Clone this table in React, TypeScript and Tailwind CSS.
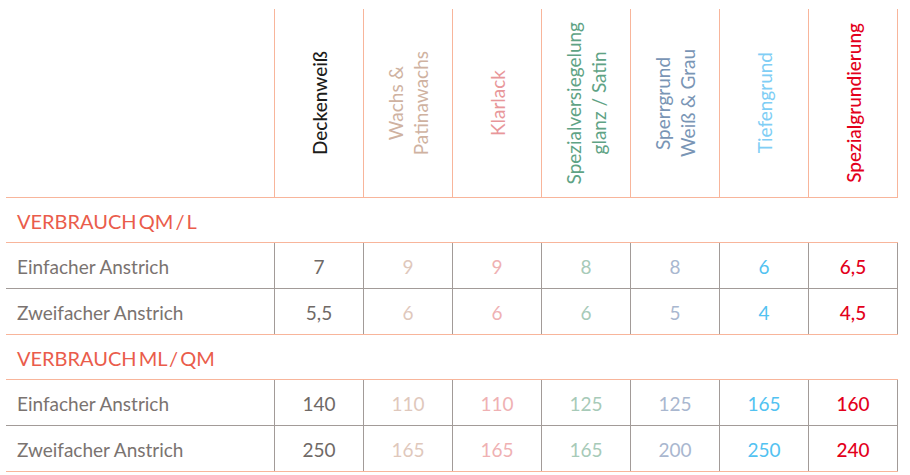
import React from "react";

type Col = {
  name: string[];
  head: string;
  num: string;
  strongHead?: boolean;
  strongNum?: boolean;
};

const COLS: Col[] = [
  { name: ["Deckenweiß"], head: "text-[#1d1d1b]", num: "text-[#6f6966]", strongHead: true },
  { name: ["Wachs &", "Patinawachs"], head: "text-[#cfb2a1]", num: "text-[#dfc8bc]" },
  { name: ["Klarlack"], head: "text-[#e8979a]", num: "text-[#efb1b3]" },
  { name: ["Spezialversiegelung", "glanz / Satin"], head: "text-[#5fa385]", num: "text-[#a7cab8]" },
  { name: ["Sperrgrund", "Weiß & Grau"], head: "text-[#7995b5]", num: "text-[#a9b7cf]" },
  { name: ["Tiefengrund"], head: "text-[#80cef5]", num: "text-[#52c2f1]" },
  {
    name: ["Spezialgrundierung"],
    head: "text-[#e3001b]",
    num: "text-[#e3001b]",
    strongHead: true,
    strongNum: true,
  },
];

const SECTIONS = [
  {
    title: "VERBRAUCH QM / L",
    rows: [
      { label: "Einfacher Anstrich", values: ["7", "9", "9", "8", "8", "6", "6,5"] },
      { label: "Zweifacher Anstrich", values: ["5,5", "6", "6", "6", "5", "4", "4,5"] },
    ],
  },
  {
    title: "VERBRAUCH ML / QM",
    rows: [
      { label: "Einfacher Anstrich", values: ["140", "110", "110", "125", "125", "165", "160"] },
      { label: "Zweifacher Anstrich", values: ["250", "165", "165", "165", "200", "250", "240"] },
    ],
  },
];

function HeaderRow() {
  return (
    <div className="flex h-[189px] border-b border-[#f8b59b]">
      <div className="w-[268px] shrink-0" />
      {COLS.map((c, i) => (
        <div
          key={c.name[0]}
          className={`w-[89px] shrink-0 border-l border-[#f8b59b] flex items-center justify-center ${
            i === COLS.length - 1 ? "w-[90px] border-r" : ""
          }`}
        >
          <div
            className={`[writing-mode:vertical-rl] rotate-180 text-center text-[19px] leading-[25px] ${c.head} ${
              c.strongHead ? "font-medium" : "font-normal"
            }`}
          >
            {c.name.map((line) => (
              <div key={line}>{line}</div>
            ))}
          </div>
        </div>
      ))}
    </div>
  );
}

function DataRow({ label, values, last }: { label: string; values: string[]; last: boolean }) {
  return (
    <div className={`flex h-[46px] border-b ${last ? "border-[#f8b59b]" : "border-[#a29b98]"}`}>
      <div className="w-[268px] shrink-0 flex items-center pl-[11px] pt-[3px] text-[19px] text-[#7a7370]">
        {label}
      </div>
      {values.map((v, i) => (
        <div
          key={i}
          className={`w-[89px] shrink-0 border-l border-[#a29b98] flex items-center justify-center pt-[3px] text-[19px] ${
            COLS[i].num
          } ${COLS[i].strongNum ? "font-medium" : "font-normal"} ${
            i === values.length - 1 ? "w-[90px] border-r" : ""
          }`}
        >
          {v}
        </div>
      ))}
    </div>
  );
}

export default function App() {
  return (
    <div className="bg-white w-[910px] h-[475px] pt-[9px] pl-[6px] font-['Lato','Liberation_Sans',sans-serif]">
      <div className="w-[892px]">
        <HeaderRow />
        {SECTIONS.map((s) => (
          <div key={s.title}>
            <div className="h-[45px] border-b border-[#f8b59b] flex items-center pl-[11px] pt-[2px] text-[20px] text-[#ea5c4b] [word-spacing:-3px]">
              {s.title}
            </div>
            {s.rows.map((r, i) => (
              <DataRow key={r.label} label={r.label} values={r.values} last={i === s.rows.length - 1} />
            ))}
          </div>
        ))}
      </div>
    </div>
  );
}
